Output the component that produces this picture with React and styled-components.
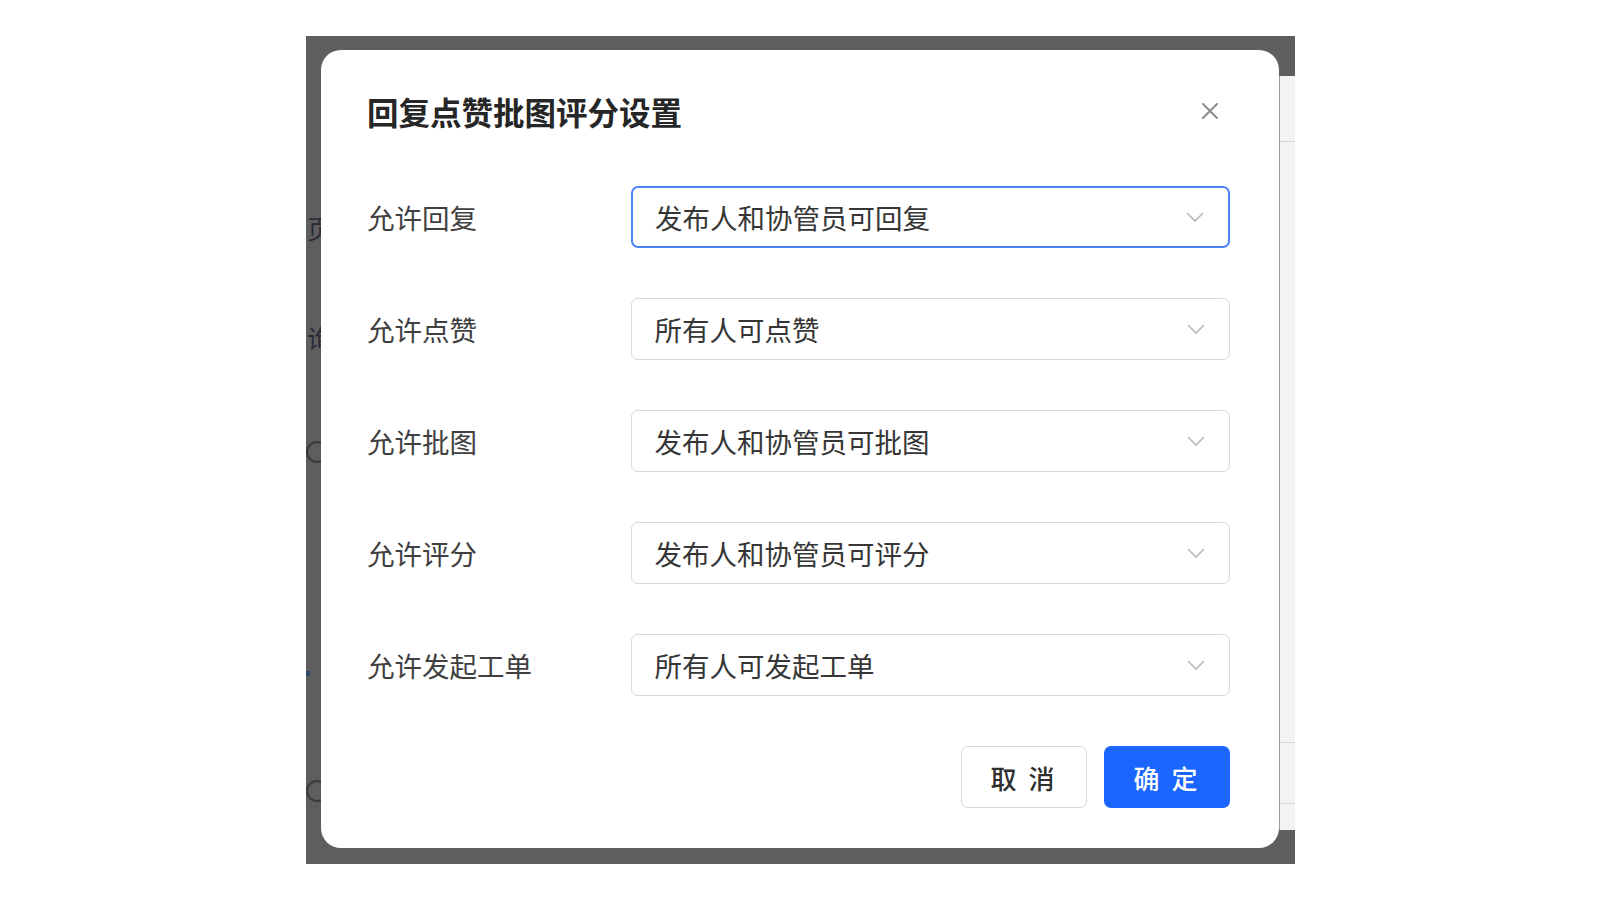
import React, { useState } from 'react'
import styled, { createGlobalStyle } from 'styled-components'

const GlobalStyle = createGlobalStyle`
  html, body {
    margin: 0;
    padding: 0;
    background: #ffffff;
    font-family: "Noto Sans CJK SC", "Noto Sans", sans-serif;
  }
`

const rows = [
  { label: '允许回复', value: '发布人和协管员可回复' },
  { label: '允许点赞', value: '所有人可点赞' },
  { label: '允许批图', value: '发布人和协管员可批图' },
  { label: '允许评分', value: '发布人和协管员可评分' },
  { label: '允许发起工单', value: '所有人可发起工单' },
]

const App = () => {
  const [active, setActive] = useState(0)

  return (
    <Page>
      <GlobalStyle />
      <Backdrop>
        {/* bits of the page under the dialog */}
        <Edge>
          <Peek $top={163}>页</Peek>
          <Peek $top={80}>询</Peek>
          <Ring $top={88} />
          <Dot $top={208} />
          <Ring $top={104} />
        </Edge>

        <Dialog>
          <Header>
            <Title>回复点赞批图评分设置</Title>
            <CloseButton type="button" aria-label="close">
              <svg width="18" height="18" viewBox="0 0 18 18">
                <path d="M2 2 L16 16 M16 2 L2 16" stroke="#8c8c8c" strokeWidth="2" strokeLinecap="round" />
              </svg>
            </CloseButton>
          </Header>

          <FormGrid>
            {rows.map((row, i) => (
              <React.Fragment key={row.label}>
                <Label>{row.label}</Label>
                <Select $active={active === i} onClick={() => setActive(i)}>
                  <span>{row.value}</span>
                  <svg width="20" height="12" viewBox="0 0 20 12">
                    <path d="M2 2 L10 10 L18 2" fill="none" stroke="#b8b8b8" strokeWidth="1.6" />
                  </svg>
                </Select>
              </React.Fragment>
            ))}
          </FormGrid>

          <Footer>
            <Button type="button">取 消</Button>
            <Button type="button" $primary>确 定</Button>
          </Footer>
        </Dialog>

        <RightEdge>
          <Line $top={65} />
          <Line $top={600} />
          <Line $top={60} />
        </RightEdge>
      </Backdrop>
    </Page>
  )
}

const Page = styled.div`
  padding: 36px 0 0 306px;
`

const Backdrop = styled.div`
  width: 989px;
  height: 828px;
  box-sizing: border-box;
  background: #5e5e5e;
  padding: 14px 0 16px 0;
  display: flex;
`

const Edge = styled.div`
  width: 15px;
  overflow: hidden;
  display: flex;
  flex-direction: column;
`

const Peek = styled.div`
  margin-top: ${(p) => p.$top}px;
  margin-left: 1px;
  font-size: 26px;
  line-height: 30px;
  color: #2b2b38;
  white-space: nowrap;
`

const Ring = styled.div`
  margin-top: ${(p) => p.$top}px;
  width: 22px;
  height: 22px;
  flex-shrink: 0;
  border: 2px solid #3a3a3a;
  border-radius: 50%;
  box-sizing: border-box;
`

const Dot = styled.div`
  margin-top: ${(p) => p.$top}px;
  width: 4px;
  height: 5px;
  background: #2c4a6e;
`

const RightEdge = styled.div`
  width: 15px;
  margin: 26px 0 18px 0;
  background: #f3f3f3;
  border-left: 1px solid #9a9a9a;
  display: flex;
  flex-direction: column;
`

const Line = styled.div`
  margin-top: ${(p) => p.$top}px;
  height: 1px;
  background: #d4d4d4;
`

const Dialog = styled.div`
  width: 959px;
  box-sizing: border-box;
  background: #ffffff;
  border-radius: 20px;
  padding: 39px 49px 41px 46px;
  display: flex;
  flex-direction: column;
`

const Header = styled.div`
  display: flex;
  align-items: center;
  justify-content: space-between;
  height: 44px;
`

const Title = styled.h2`
  margin: 0;
  font-size: 31.5px;
  line-height: 44px;
  font-weight: 700;
  color: #262626;
`

const CloseButton = styled.button`
  border: 0;
  background: transparent;
  padding: 0;
  margin-right: 11px;
  display: flex;
  cursor: pointer;
`

const FormGrid = styled.div`
  margin-top: 53px;
  display: grid;
  grid-template-columns: 264px 1fr;
  grid-auto-rows: 62px;
  row-gap: 50px;
  align-items: center;
`

const Label = styled.div`
  font-size: 27.5px;
  color: #404040;
  white-space: nowrap;
`

const Select = styled.div`
  height: 62px;
  box-sizing: border-box;
  border: ${(p) => (p.$active ? '2px solid #4d84f7' : '1.5px solid #d9d9d9')};
  border-radius: 7px;
  padding: 0 23px 0 ${(p) => (p.$active ? '22px' : '22.5px')};
  display: flex;
  align-items: center;
  justify-content: space-between;
  font-size: 27.5px;
  color: #363636;
  cursor: pointer;
`

const Footer = styled.div`
  margin-top: 50px;
  display: flex;
  justify-content: flex-end;
  gap: 17px;
`

const Button = styled.button`
  width: 126px;
  height: 62px;
  box-sizing: border-box;
  border-radius: 7px;
  border: ${(p) => (p.$primary ? '0' : '1.5px solid #d9d9d9')};
  background: ${(p) => (p.$primary ? '#1a66ff' : '#ffffff')};
  color: ${(p) => (p.$primary ? '#ffffff' : '#2f2f2f')};
  font-family: "Noto Sans CJK SC", sans-serif;
  font-size: 26px;
  font-weight: 500;
  letter-spacing: 3px;
  cursor: pointer;
`

export default App
